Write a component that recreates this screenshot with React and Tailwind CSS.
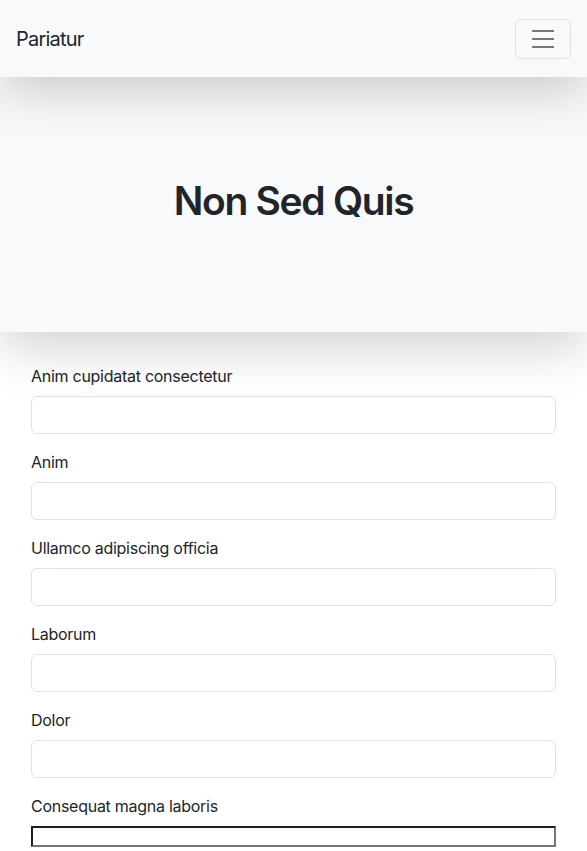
import React from 'react';

const fields = [
  'Anim cupidatat consectetur',
  'Anim',
  'Ullamco adipiscing officia',
  'Laborum',
  'Dolor',
];

const App = () => {
  return (
    <div className="min-h-screen bg-white text-[#212529] font-['Inter','Liberation_Sans',sans-serif]">
      <nav className="relative z-20 flex h-[77px] items-center justify-between bg-[#f8f9fa] px-4 shadow-[0_16px_48px_rgba(0,0,0,0.175)]">
        <a className="text-[20px] leading-[30px] tracking-[-0.8px]">Pariatur</a>
        <button className="flex h-[40px] w-[56px] items-center justify-center rounded-[6px] border border-[rgba(0,0,0,0.1)]">
          <svg width="30" height="30" viewBox="0 0 30 30">
            <path
              d="M4 7h22M4 15h22M4 23h22"
              stroke="rgba(33,37,41,0.6)"
              strokeWidth="2"
              strokeLinecap="butt"
            />
          </svg>
        </button>
      </nav>

      <section className="relative z-10 flex h-[255px] items-center justify-center bg-[#f8f9fa] pb-[8px] shadow-[0_16px_48px_rgba(0,0,0,0.175)]">
        <h1 className="text-[39px] font-semibold leading-[48px] tracking-[-1.3px]">Non Sed Quis</h1>
      </section>

      <form className="px-[31px] pt-[32px]">
        {fields.map((label) => (
          <div key={label} className="mb-4">
            <label className="mb-2 block text-[16px] leading-[24px] tracking-[-0.27px]">{label}</label>
            <input
              type="text"
              className="block h-[38px] w-full rounded-[6px] border border-[#dee2e6] bg-white px-3"
            />
          </div>
        ))}
        <div>
          <label className="mb-2 block text-[16px] leading-[24px] tracking-[-0.27px]">Consequat magna laboris</label>
          <div className="mt-[1px] h-[21px] w-full border-2 border-t-[#1f1f1f] border-l-[#1f1f1f] border-b-[#767676] border-r-[#767676] bg-white" />
        </div>
      </form>
    </div>
  );
};

export default App;
